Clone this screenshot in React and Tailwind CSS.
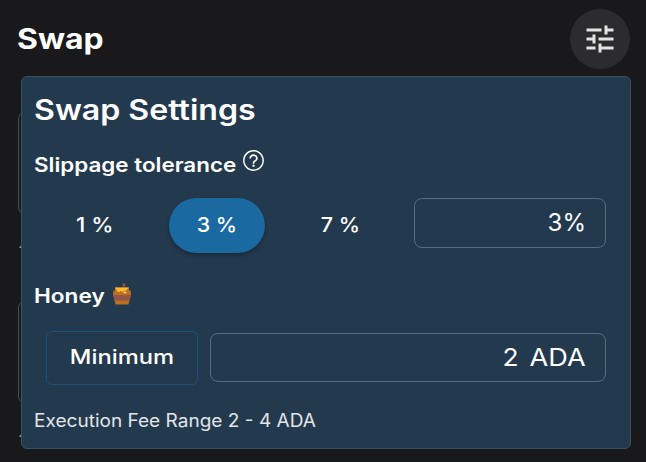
import React from "react";

function TuneIcon() {
  return (
    <svg viewBox="0 0 24 24" className="h-9 w-9" fill="#e3e3e4">
      <path d="M3 17v2h6v-2H3zM3 5v2h10V5H3zm10 16v-2h8v-2h-8v-2h-2v6h2zM7 9v2H3v2h4v2h2V9H7zm14 4v-2H11v2h10zm-6-4h2V7h4V5h-4V3h-2v6z" />
    </svg>
  );
}

function HelpIcon() {
  return (
    <svg viewBox="0 0 24 24" className="h-[25px] w-[25px]" fill="#fff">
      <path d="M11 18h2v-2h-2v2zm1-16C6.480 2 2 6.480 2 12s4.480 10 10 10 10-4.480 10-10S17.520 2 12 2zm0 18.600c-4.740 0-8.600-3.860-8.600-8.600S7.260 3.400 12 3.400s8.600 3.860 8.600 8.600-3.860 8.600-8.600 8.600zm0-14.600c-2.210 0-4 1.790-4 4h1.600c0-1.300 1.100-2.400 2.400-2.400s2.400 1.100 2.400 2.400c0 2-3.200 1.750-3.200 5h1.600c0-2.250 3.200-2.500 3.200-5 0-2.210-1.790-4-4-4z" />
    </svg>
  );
}

function HoneyPot() {
  return (
    <svg viewBox="0 0 20 22" className="mb-1 h-[22px] w-5">
      <path d="M11.500 5V2" stroke="#7d4b45" strokeWidth="1.200" />
      <circle cx="12" cy="2" r="1.400" fill="#985647" />
      <path d="M3 4.500h14v3h1.500c.6 2 .5 4 0 6L16.500 21.500h-13L1.500 13.500c-.5-2-.6-4 0-6H3z" fill="#bd7022" />
      <path d="M1.200 12h17.600l-1.300 5.500h-15z" fill="#925547" />
      <path d="M3 4.500h14l-1.500 1.500c-1.500 2-2.500 1-3.500 2-1.500 1.500-2.500 0-3.500 0C7 10 5.500 9 5 7.500 4.500 6.500 3.500 6 3 4.500z" fill="#fdbc2e" />
      <path d="m13 7.500.6 1.300 1.300.6-1.300.6-.6 1.300-.6-1.300-1.300-.6 1.300-.6z" fill="#ffd45c" />
    </svg>
  );
}

export default function App() {
  return (
    <main className="relative h-[462px] w-[646px] overflow-hidden bg-[#19191b] font-['Inter',sans-serif] text-white">
      <header className="flex h-[77px] items-center justify-between pr-4 pl-[17px]">
        <h1 className="origin-left scale-x-[1.14] text-[28px] leading-9 font-bold">Swap</h1>
        <button className="flex h-[60px] w-[60px] items-center justify-center rounded-full bg-[#2c2c2e]">
          <TuneIcon />
        </button>
      </header>

      <div className="flex flex-col pl-[18px]">
        <div className="mt-[34px] h-[104px] w-[608px] rounded-lg border border-[#4b4c4e]" />
        <span className="mt-[30px] ml-[2px] h-[3px] w-4 -skew-x-[35deg] bg-[#8d8e8f]" />
        <div className="mt-[52px] h-[104px] w-[608px] rounded-lg border border-[#4b4c4e]" />
        <span className="mt-[30px] ml-[2px] h-[3px] w-4 -skew-x-[35deg] bg-[#8d8e8f]" />
      </div>

      <section className="absolute top-[76px] left-[21px] flex h-[373px] w-[610px] flex-col rounded-md border border-[#3b5061] bg-[#23394d] px-3">
        <h2 className="mt-[15px] w-fit origin-left scale-x-[1.147] text-[28px] leading-9 font-semibold">Swap Settings</h2>
        <div className="mt-5 flex h-8 items-start">
          <h3 className="mt-[3px] w-[207px] origin-left scale-x-[1.12] text-[20px] leading-7 font-semibold whitespace-nowrap">Slippage tolerance</h3>
          <HelpIcon />
        </div>
        <div className="mt-[18px] flex h-[55px] items-start">
          <div className="flex w-[380px]">
            <button className="flex h-[55px] w-[122px] items-center justify-center pb-[2px] text-[20px] font-medium">
              <span className="scale-x-[1.12]">1 %</span>
            </button>
            <button className="mx-[13px] flex h-[55px] w-24 items-center justify-center rounded-[28px] bg-[#1a6aa1] pb-[2px] text-[20px] font-medium shadow-[0_2px_4px_rgba(0,0,0,0.3)]">
              <span className="scale-x-[1.07]">3 %</span>
            </button>
            <button className="flex h-[55px] w-[122px] items-center justify-center pb-[2px] pl-[2px] text-[20px] font-medium">
              <span className="scale-x-[1.07]">7 %</span>
            </button>
          </div>
          <div className="flex h-[50px] w-48 items-center justify-end rounded-lg border border-[#596c7b] pr-[19px] text-[24px]">3%</div>
        </div>
        <div className="mt-[29px] flex h-7 items-center">
          <h3 className="w-[78px] origin-left scale-x-[1.13] text-[20px] font-semibold">Honey</h3>
          <HoneyPot />
        </div>
        <div className="mt-[21px] flex h-[54px] items-start gap-3 pl-3">
          <button className="flex h-[54px] w-[152px] items-center justify-center rounded-md border border-[#1d5279] pb-[2px] text-[20px] font-medium">
            <span className="scale-x-[1.185]">Minimum</span>
          </button>
          <div className="mt-[2px] flex h-[49px] w-[396px] items-center justify-end gap-[18px] rounded-lg border border-[#596c7b] pr-[19px] text-[24px]">
            <span className="origin-right scale-x-[1.1]">2</span>
            <span className="origin-right scale-x-[1.13]">ADA</span>
          </div>
        </div>
        <p className="mt-[22px] w-fit origin-left scale-x-[1.058] text-[18px] leading-7 text-[#e2e5e7]">Execution Fee Range 2 - 4 ADA</p>
      </section>
    </main>
  );
}
